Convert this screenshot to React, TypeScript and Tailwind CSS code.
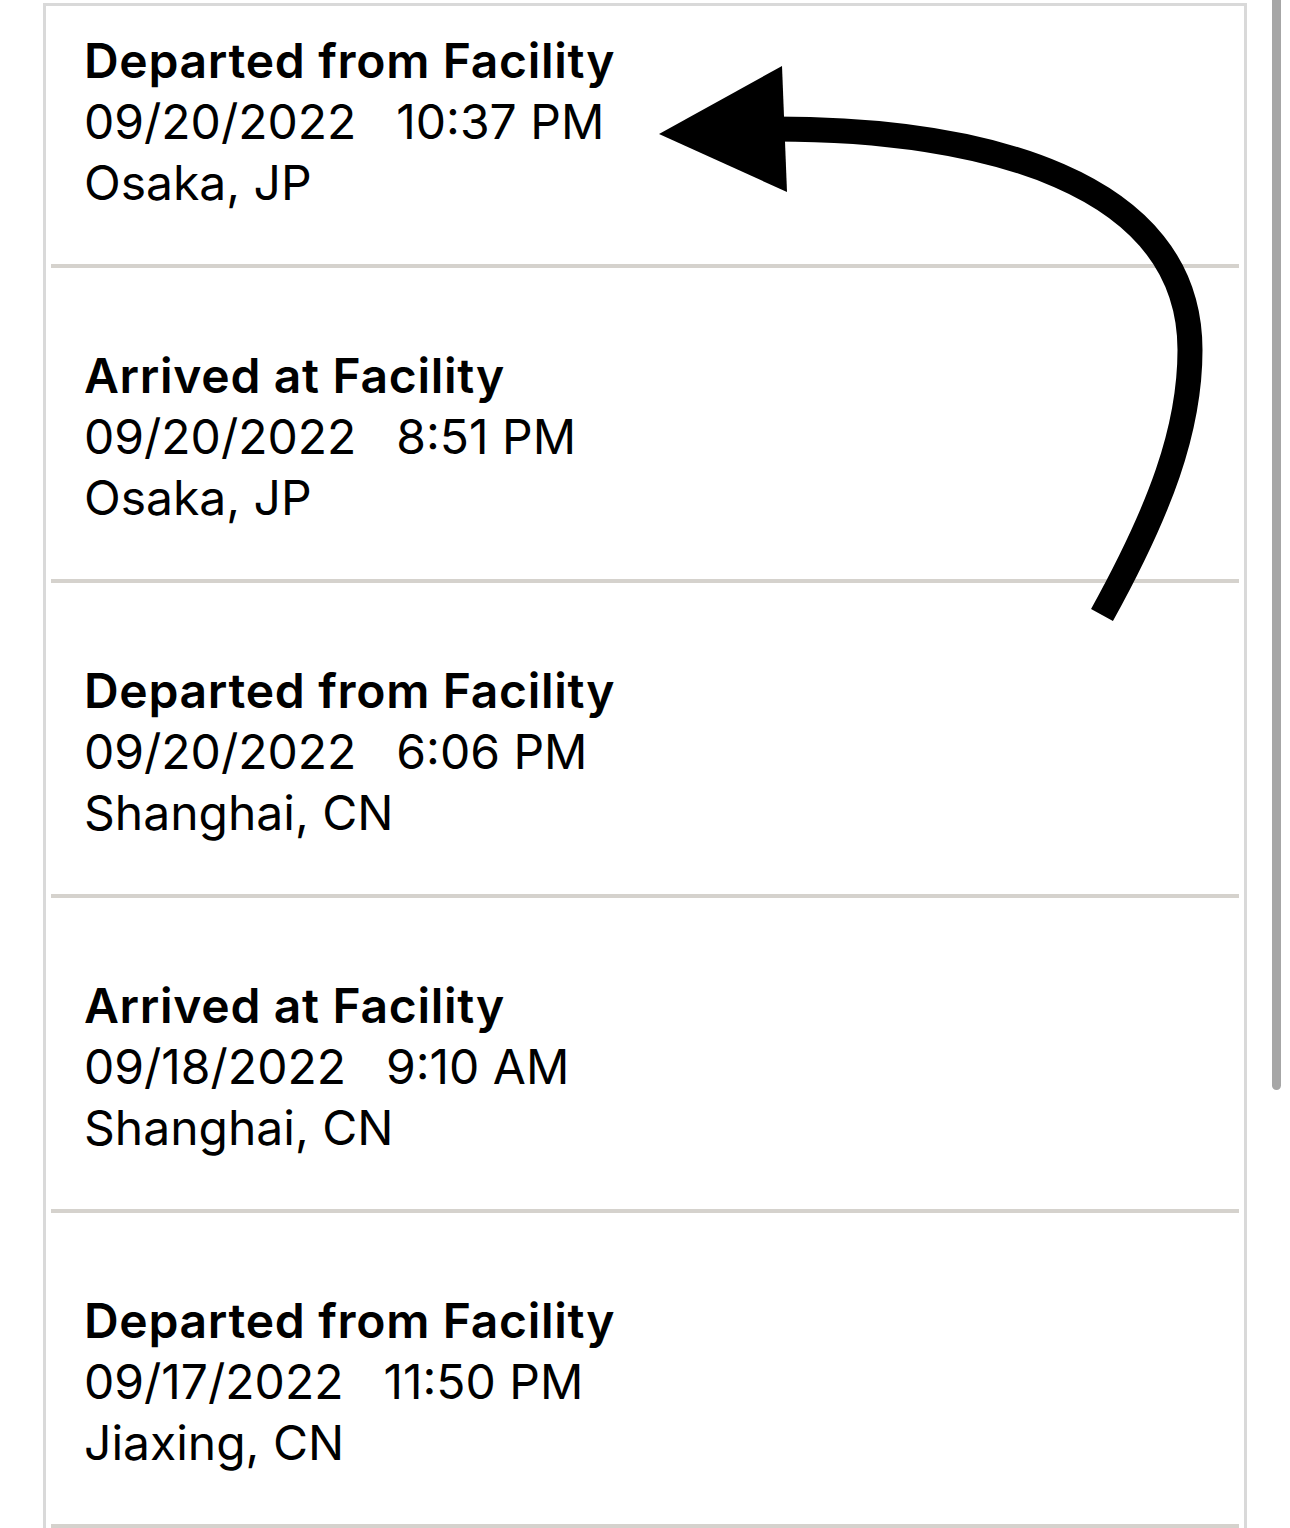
const events = [
  { status: "Departed from Facility", date: "09/20/2022", time: "10:37 PM", place: "Osaka, JP" },
  { status: "Arrived at Facility", date: "09/20/2022", time: "8:51 PM", place: "Osaka, JP" },
  { status: "Departed from Facility", date: "09/20/2022", time: "6:06 PM", place: "Shanghai, CN" },
  { status: "Arrived at Facility", date: "09/18/2022", time: "9:10 AM", place: "Shanghai, CN" },
  { status: "Departed from Facility", date: "09/17/2022", time: "11:50 PM", place: "Jiaxing, CN" },
];

export default function App() {
  return (
    <div className="relative h-[1528px] w-[1290px] overflow-hidden bg-white font-['Inter',sans-serif] text-black">
      <div className="flex items-start">
        {/* tracking card */}
        <div className="ml-[43px] mt-[3px] h-[1560px] w-[1204px] overflow-hidden border-[3px] border-b-0 border-[#d9d9d9] bg-white">
          <ul className="-mt-[53px] px-[5px]">
            {events.map((e, i) => (
              <li key={i}>
                <div className="pb-[51px] pl-[33px] pt-[77px] text-[48px] leading-[61px]">
                  <p className="font-semibold tracking-[0.7px]">{e.status}</p>
                  <p className="flex gap-[40px]">
                    <span>{e.date}</span>
                    <span>{e.time}</span>
                  </p>
                  <p>{e.place}</p>
                </div>
                <div className="h-[4px] bg-[#d5d2cd]" />
              </li>
            ))}
          </ul>
        </div>

        {/* scroll indicator */}
        <div className="ml-[25px] h-[1090px] w-[9px] rounded-b-full bg-[#a6a6a6]" />
      </div>

      {/* hand-drawn arrow */}
      <svg
        className="pointer-events-none absolute left-0 top-0"
        width="1290"
        height="1528"
        viewBox="0 0 1290 1528"
      >
        <path
          d="M 775 129 C 980 129 1190 180 1190 350 C 1190 430 1160 510 1102 615"
          fill="none"
          stroke="#000"
          strokeWidth="25"
        />
        <polygon points="659,134 782,66 787,192" fill="#000" />
      </svg>
    </div>
  );
}
